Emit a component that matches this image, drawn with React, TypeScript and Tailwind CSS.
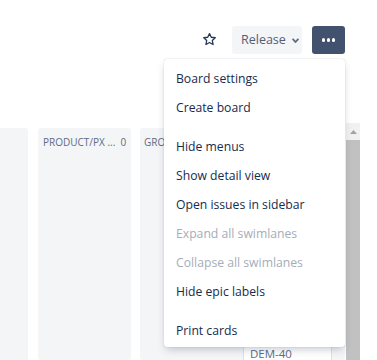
import React from "react";

const items: { label: string; disabled?: boolean; section: number }[] = [
  { label: "Board settings", section: 0 },
  { label: "Create board", section: 0 },
  { label: "Hide menus", section: 1 },
  { label: "Show detail view", section: 1 },
  { label: "Open issues in sidebar", section: 1 },
  { label: "Expand all swimlanes", disabled: true, section: 1 },
  { label: "Collapse all swimlanes", disabled: true, section: 1 },
  { label: "Hide epic labels", section: 1 },
  { label: "Print cards", section: 2 },
];

function Section({ list }: { list: typeof items }) {
  return (
    <div className="flex flex-col">
      {list.map((it) => (
        <div
          key={it.label}
          className={
            "h-[29px] flex items-center pl-[12px] text-[12.2px] " +
            (it.disabled ? "text-[#a5adba]" : "text-[#172b4d]")
          }
        >
          {it.label}
        </div>
      ))}
    </div>
  );
}

export default function App() {
  return (
    <div
      className="relative w-[377px] h-[360px] bg-white overflow-hidden"
      style={{ fontFamily: "'Open Sans', 'Noto Sans', sans-serif" }}
    >
      {/* top bar */}
      <div className="flex items-center justify-end pt-[26px] pr-[32px] h-[54px]">
        <svg width="15" height="15" viewBox="0 0 24 24" className="mr-[15px] mb-[1px]">
          <path
            d="M12 2.5l2.8 5.9 6.4.8-4.7 4.4 1.2 6.4-5.7-3.2-5.7 3.2 1.2-6.4-4.7-4.4 6.4-.8z"
            fill="none"
            stroke="#253858"
            strokeWidth="2.1"
            strokeLinejoin="round"
          />
        </svg>
        <div className="flex items-center h-[28px] w-[70px] bg-[#f4f5f7] rounded-[3px] pl-[9px] text-[12.5px] text-[#505f79]">
          Release
          <svg width="7" height="5" viewBox="0 0 7 5" className="ml-[6px]">
            <path d="M0.6 0.8 L3.5 4 L6.4 0.8" fill="none" stroke="#5e6c84" strokeWidth="1.8" />
          </svg>
        </div>
        <div className="ml-[10px] flex items-center justify-center gap-[1.5px] h-[28px] w-[33px] bg-[#42526e] rounded-[3px]">
          <span className="w-[3.5px] h-[3.5px] rounded-full bg-white" />
          <span className="w-[3.5px] h-[3.5px] rounded-full bg-white" />
          <span className="w-[3.5px] h-[3.5px] rounded-full bg-white" />
        </div>
      </div>

      {/* board */}
      <div className="flex mt-[69px] h-[237px] pr-[17px]">
        <div className="w-[28px] mt-[5px] bg-[#f4f5f7] rounded-tr-[3px]" />
        <div className="w-[93px] ml-[10px] mt-[5px] bg-[#f4f5f7] rounded-[3px] pt-[7px] pl-[5px]">
          <div className="text-[10px] text-[#5e6c84] uppercase whitespace-nowrap">PRODUCT/PX ...&nbsp; 0</div>
        </div>
        <div className="flex-1 ml-[9px] mt-[5px] bg-[#f4f5f7] rounded-[3px] pt-[7px] pl-[4px] flex flex-col">
          <div className="text-[10px] text-[#5e6c84] uppercase whitespace-nowrap">GRO</div>
          <div className="mt-auto ml-[99px] mr-[13px] h-[24px] bg-white border border-[#dfe1e6] rounded-[3px] pl-[6px] pt-[2px] text-[11.5px] text-[#5e6c84] mb-[-6px]">
            DEM-40
          </div>
        </div>
        <div className="w-[14px] ml-[1px] flex flex-col">
          <div className="h-[17px] bg-[#f1f1f1] flex items-center justify-center">
            <svg width="7" height="4" viewBox="0 0 7 4">
              <path d="M0 4 L3.5 0 L7 4 Z" fill="#a3a3a3" />
            </svg>
          </div>
          <div className="flex-1 bg-[#c1c1c1]" />
        </div>
      </div>

      {/* dropdown menu */}
      <div className="absolute left-[164px] top-[59px] w-[181px] h-[288px] bg-white rounded-[3px] shadow-[0_4px_8px_-2px_rgba(9,30,66,0.25),0_0_1px_rgba(9,30,66,0.31)] pt-[6px] flex flex-col">
        <Section list={items.filter((i) => i.section === 0)} />
        <div className="h-[10px]" />
        <Section list={items.filter((i) => i.section === 1)} />
        <div className="h-[10px]" />
        <Section list={items.filter((i) => i.section === 2)} />
      </div>
    </div>
  );
}
